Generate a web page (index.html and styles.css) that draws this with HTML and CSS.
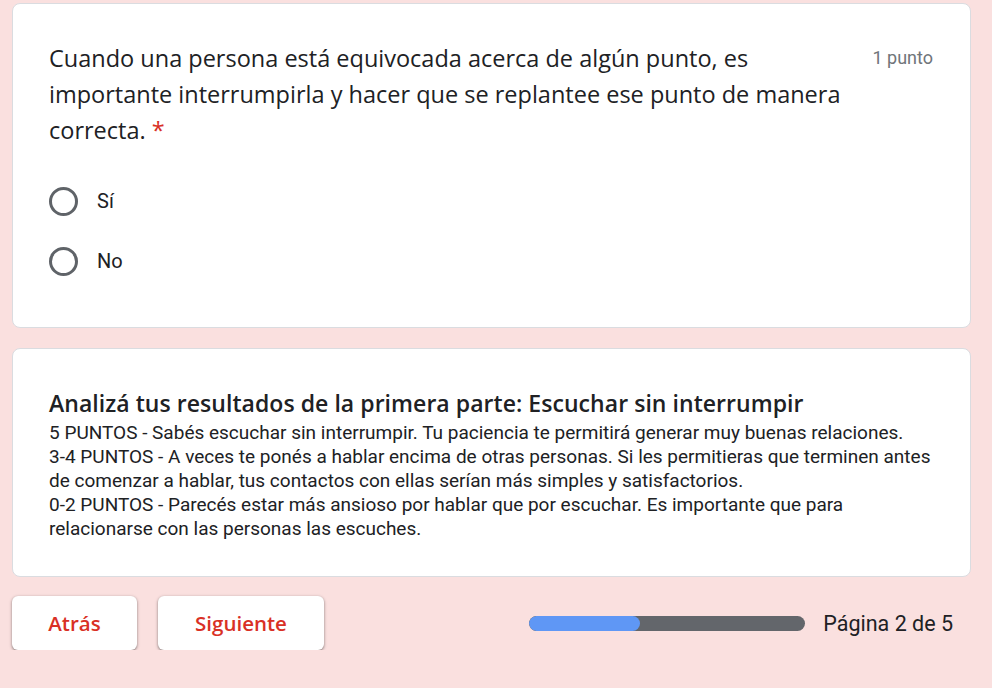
FILE: index.html
```html
<!DOCTYPE html>
<html lang="es">
<head>
<meta charset="utf-8">
<link rel="stylesheet" href="styles.css">
</head>
<body>
<div class="page">
  <div class="card question">
    <div class="q-head">
      <div class="q-title">Cuando una persona está equivocada acerca de algún punto, es importante interrumpirla y hacer que se replantee ese punto de manera correcta. <span class="req">*</span></div>
      <div class="q-points">1 punto</div>
    </div>
    <div class="options">
      <div class="option"><span class="radio"></span><span class="opt-label">Sí</span></div>
      <div class="option"><span class="radio"></span><span class="opt-label">No</span></div>
    </div>
  </div>
  <div class="card section">
    <div class="s-title">Analizá tus resultados de la primera parte: Escuchar sin interrumpir</div>
    <div class="s-body">5 PUNTOS - Sabés escuchar sin interrumpir. Tu paciencia te permitirá generar muy buenas relaciones.<br>3-4 PUNTOS - A veces te ponés a hablar encima de otras personas. Si les permitieras que terminen antes de comenzar a hablar, tus contactos con ellas serían más simples y satisfactorios.<br>0-2 PUNTOS - Parecés estar más ansioso por hablar que por escuchar. Es importante que para relacionarse con las personas las escuches.</div>
  </div>
  <div class="footer">
    <button class="btn btn-back">Atrás</button>
    <button class="btn btn-next">Siguiente</button>
    <div class="progress">
      <div class="bar"><div class="bar-fill" style="width:40%"></div></div>
      <div class="page-label">Página 2 de 5</div>
    </div>
  </div>
</div>
</body>
</html>
```
FILE: styles.css
```css
html, body {
  margin: 0;
  padding: 0;
  background: #fae0df;
}
body {
  font-family: Roboto, "Liberation Sans", sans-serif;
  color: #202124;
}
.page {
  width: 959px;
  padding: 3px 0 0 12px;
  display: flex;
  flex-direction: column;
  gap: 20px;
}
.card {
  background: #fff;
  border: 1px solid #dadce0;
  border-radius: 8px;
  box-sizing: border-box;
}
.question {
  height: 325px;
  padding: 36px 36px 0 36px;
}
.q-head {
  display: flex;
  justify-content: space-between;
  gap: 24px;
}
.q-title {
  font-family: "Open Sans", sans-serif;
  font-size: 23.5px;
  line-height: 36px;
  color: #202124;
  max-width: 795px;
}
.req {
  color: #d93025;
}
.q-points {
  font-family: Roboto, sans-serif;
  font-size: 18px;
  color: #70757a;
  line-height: 36px;
  white-space: nowrap;
  padding-right: 1px;
}
.options {
  margin-top: 39px;
  display: flex;
  flex-direction: column;
  gap: 32px;
}
.option {
  display: flex;
  align-items: center;
  height: 28px;
}
.radio {
  width: 29px;
  height: 29px;
  box-sizing: border-box;
  border: 3px solid #5f6368;
  border-radius: 50%;
}
.opt-label {
  margin-left: 19px;
  font-size: 20px;
}
.section {
  height: 229px;
  padding: 36px 36px 0 36px;
}
.s-title {
  font-family: "Open Sans", sans-serif;
  font-weight: 600;
  font-size: 23px;
  letter-spacing: 0.05px;
  line-height: 36px;
}
.s-body {
  font-size: 19px;
  line-height: 24px;
  color: #202124;
}
.footer {
  display: flex;
  align-items: center;
  gap: 21px;
  margin-top: -1px;
  padding-right: 18px;
}
.btn {
  background: #fff;
  border: none;
  border-radius: 6px;
  height: 54px;
  box-shadow: 0 1px 2px rgba(0,0,0,0.3), 0 1px 3px 1px rgba(0,0,0,0.15);
  font-family: "Open Sans", sans-serif;
  font-weight: 600;
  font-size: 20.5px;
  color: #d93025;
  padding: 0;
}
.btn-back { width: 125px; }
.btn-next { width: 166px; }
.progress {
  margin-left: auto;
  display: flex;
  align-items: center;
  gap: 18px;
}
.bar {
  width: 276px;
  height: 15px;
  border-radius: 8px;
  background: #63666b;
  overflow: hidden;
}
.bar-fill {
  height: 100%;
  background: #5f97f5;
  border-radius: 8px;
}
.page-label {
  font-size: 21.5px;
  color: #202124;
}
```
